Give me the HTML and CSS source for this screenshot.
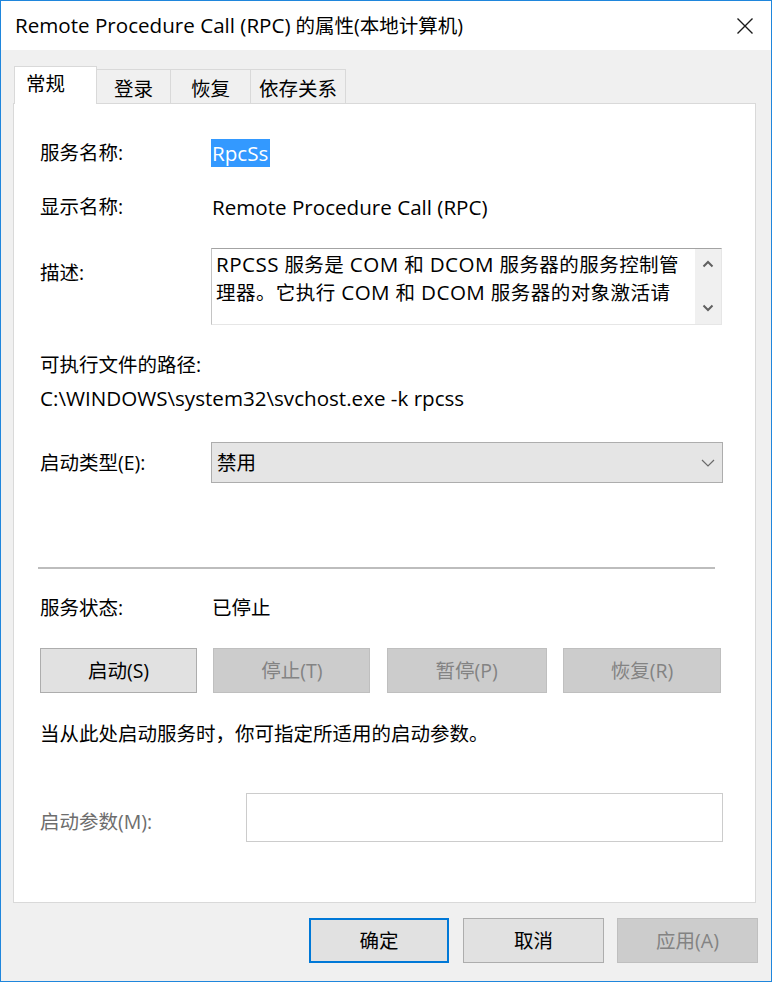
FILE: index.html
```html
<!DOCTYPE html>
<html lang="zh-CN">
<head>
<meta charset="utf-8">
<title>Remote Procedure Call (RPC) 的属性(本地计算机)</title>
<link rel="stylesheet" href="styles.css">
</head>
<body>
<div class="window">
  <div class="titlebar">
    <span class="title"><span class="en">Remote Procedure Call (RPC)</span> 的属性(本地计算机)</span>
    <svg class="close" width="18" height="18" viewBox="0 0 18 18"><path d="M1.5 1.5 L16.5 16.5 M16.5 1.5 L1.5 16.5" stroke="#1a1a1a" stroke-width="1.4" fill="none"/></svg>
  </div>
  <div class="body">
    <div class="tabs">
      <div class="tab active">常规</div>
      <div class="tab t2">登录</div>
      <div class="tab t3">恢复</div>
      <div class="tab t4">依存关系</div>
    </div>
    <div class="panel">
      <div class="row r1">
        <span class="label">服务名称:</span>
        <span class="sel en">RpcSs</span>
      </div>
      <div class="row r2">
        <span class="label">显示名称:</span>
        <span class="value en">Remote Procedure Call (RPC)</span>
      </div>
      <div class="row r3">
        <span class="label desc-label">描述:</span>
        <div class="textarea">
          <div class="ta-text">
            <div class="ta-line"><span class="en">RPCSS</span> 服务是 <span class="en">COM</span> 和 <span class="en">DCOM</span> 服务器的服务控制管</div>
            <div class="ta-line">理器。它执行 <span class="en">COM</span> 和 <span class="en">DCOM</span> 服务器的对象激活请</div>
          </div>
          <div class="scroll">
            <svg width="12" height="8" viewBox="0 0 12 8"><path d="M1.5 6.5 L6 2 L10.5 6.5" stroke="#606060" stroke-width="2" fill="none"/></svg>
            <svg width="12" height="8" viewBox="0 0 12 8"><path d="M1.5 1.5 L6 6 L10.5 1.5" stroke="#606060" stroke-width="2" fill="none"/></svg>
          </div>
        </div>
      </div>
      <div class="line r4">可执行文件的路径:</div>
      <div class="line r5 en">C:\WINDOWS\system32\svchost.exe -k rpcss</div>
      <div class="row r6">
        <span class="label">启动类型(E):</span>
        <div class="select">
          <span>禁用</span>
          <svg width="14" height="8" viewBox="0 0 14 8"><path d="M1 1 L7 7 L13 1" stroke="#6a6a6a" stroke-width="1.2" fill="none"/></svg>
        </div>
      </div>
      <div class="sep"></div>
      <div class="row r7">
        <span class="label">服务状态:</span>
        <span class="value">已停止</span>
      </div>
      <div class="btnrow">
        <div class="btn b1">启动(S)</div>
        <div class="btn b2 disabled">停止(T)</div>
        <div class="btn b3 disabled">暂停(P)</div>
        <div class="btn b4 disabled">恢复(R)</div>
      </div>
      <div class="line r9">当从此处启动服务时，你可指定所适用的启动参数。</div>
      <div class="row r10">
        <span class="label param-label">启动参数(M):</span>
        <div class="input"></div>
      </div>
    </div>
    <div class="footer">
      <div class="btn fb ok">确定</div>
      <div class="btn fb">取消</div>
      <div class="btn fb disabled">应用(A)</div>
    </div>
  </div>
</div>
</body>
</html>
```
FILE: styles.css
```css
html, body {
  margin: 0;
  padding: 0;
  background: #ffffff;
}
body {
  font-family: "Open Sans", "Noto Sans CJK SC", "Microsoft YaHei", sans-serif;
  font-size: 19.5px;
  color: #000;
}
.en {
  font-size: 20.6px;
}
.window {
  width: 770px;
  height: 980px;
  border: 1px solid #1f86dc;
  display: flex;
  flex-direction: column;
  background: #f0f0f0;
}
.titlebar {
  height: 49px;
  background: #ffffff;
  display: flex;
  align-items: center;
  justify-content: space-between;
  padding: 0 17px 0 14px;
  flex: none;
}
.title {
  line-height: 28px;
  color: #000;
}
.close {
  display: block;
}
.body {
  flex: 1;
  padding: 16px 0 0 12px;
  display: flex;
  flex-direction: column;
}
.tabs {
  display: flex;
  align-items: flex-end;
  margin-left: 1px;
  margin-bottom: -1px;
  height: 38px;
}
.tab {
  box-sizing: border-box;
  height: 35px;
  border: 1px solid #d9d9d9;
  border-left: none;
  background: #f0f0f0;
  display: flex;
  align-items: center;
  justify-content: center;
  line-height: 28px;
  padding-top: 4px;
}
.tab.active {
  height: 38px;
  width: 83px;
  background: #ffffff;
  border-left: 1px solid #d9d9d9;
  border-bottom: none;
  position: relative;
  z-index: 1;
  justify-content: flex-start;
  padding: 0 0 4px 11px;
}
.t2 { width: 74px; }
.t3 { width: 80px; }
.t4 { width: 95px; }
.panel {
  box-sizing: border-box;
  width: 743px;
  height: 800px;
  background: #ffffff;
  border: 1px solid #d9d9d9;
  padding: 35px 0 0 26px;
  flex: none;
}
.row {
  display: flex;
  align-items: center;
}
.label {
  width: 172px;
  flex: none;
  line-height: 28px;
}
.value {
  line-height: 28px;
}
.line {
  line-height: 28px;
}
.r1 { height: 28px; }
.sel {
  background: #3399ff;
  color: #ffffff;
  line-height: 28px;
  padding: 0 2px 0 1px;
  margin-left: -1px;
}
.r2 { height: 28px; margin-top: 26px; }
.r3 {
  margin-top: 27px;
  align-items: flex-start;
}
.desc-label {
  padding-top: 11px;
  margin-right: -1px;
}
.textarea {
  box-sizing: border-box;
  width: 511px;
  height: 77px;
  border-top: 1px solid #a3a3a3;
  border-left: 1px solid #c4c4c4;
  border-right: 1px solid #e6e6e6;
  border-bottom: 1px solid #e6e6e6;
  display: flex;
}
.ta-text {
  flex: 1;
  padding: 1px 0 0 4px;
  line-height: 28px;
  overflow: hidden;
  height: 74px;
}
.ta-line {
  white-space: nowrap;
  height: 28px;
  letter-spacing: 0.45px;
}
.scroll {
  width: 26px;
  background: #f0f0f0;
  display: flex;
  flex-direction: column;
  align-items: center;
  justify-content: space-between;
  padding: 11px 0 12px;
  box-sizing: border-box;
}
.scroll svg { display: block; }
.r4 { margin-top: 26px; }
.r5 { margin-top: 5px; }
.r6 { margin-top: 30px; }
.select {
  box-sizing: border-box;
  width: 512px;
  height: 41px;
  margin-left: -1px;
  background: #e5e5e5;
  border: 1px solid #adadad;
  display: flex;
  align-items: center;
  justify-content: space-between;
  padding: 0 7px 0 5px;
  line-height: 28px;
}
.select svg { display: block; }
.sep {
  width: 677px;
  height: 2px;
  margin-top: 84px;
  margin-left: -2px;
  background: #bdbdbd;
}
.r7 { height: 28px; margin-top: 25px; }
.btnrow {
  display: flex;
  margin-top: 26px;
  width: 681px;
  justify-content: space-between;
}
.btn {
  box-sizing: border-box;
  height: 45px;
  border: 1px solid #adadad;
  background: #e1e1e1;
  display: flex;
  align-items: center;
  justify-content: center;
  line-height: 28px;
  color: #000;
}
.btn.disabled {
  background: #cccccc;
  border-color: #bfbfbf;
  color: #838383;
}
.b1 { width: 157px; }
.b2 { width: 157px; }
.b3 { width: 160px; }
.b4 { width: 158px; }
.r9 { margin-top: 27px; }
.r10 {
  margin-top: 45px;
}
.param-label {
  width: 206px;
  color: #6d6d6d;
  padding-top: 9px;
}
.input {
  box-sizing: border-box;
  width: 477px;
  height: 49px;
  border: 1px solid #cccccc;
  background: #ffffff;
}
.footer {
  display: flex;
  margin-top: 15px;
  padding-left: 296px;
}
.fb {
  width: 141px;
  height: 45px;
}
.fb + .fb { margin-left: 14px; }
.fb.disabled { margin-left: 13px; }
.ok {
  border: 2px solid #0078d7;
  width: 140px;
}
```
